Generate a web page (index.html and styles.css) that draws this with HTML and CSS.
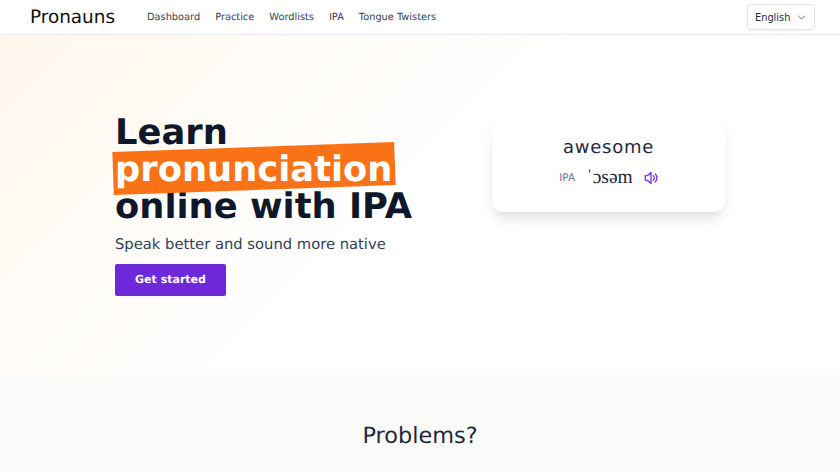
FILE: index.html
```html
<!DOCTYPE html>
<html lang="en">
<head>
  <meta charset="UTF-8">
  <title>Pronauns</title>
  <meta name="viewport" content="width=device-width, initial-scale=1">
  <link rel="stylesheet" href="styles.css">
</head>
<body>

  <header class="topbar">
    <div class="topbar-left">
      <a class="logo" href="#">Pronauns</a>
      <nav class="nav">
        <a href="#">Dashboard</a>
        <a href="#">Practice</a>
        <a href="#">Wordlists</a>
        <a href="#">IPA</a>
        <a href="#">Tongue Twisters</a>
      </nav>
    </div>
    <button class="lang" type="button">
      English
      <svg class="chevron" viewBox="0 0 20 20" fill="none" stroke="currentColor" stroke-width="1.5" stroke-linecap="round" stroke-linejoin="round"><path d="M5 7.5l5 5 5-5"/></svg>
    </button>
  </header>

  <section class="hero">
    <div class="hero-text">
      <h1>Learn <span class="mark">pronunciation</span> online with IPA</h1>
      <p class="sub">Speak better and sound more native</p>
      <a class="cta" href="#">Get started</a>
    </div>
    <div class="card">
      <div class="word">awesome</div>
      <div class="ipa-row">
        <span class="ipa-label">IPA</span>
        <span class="ipa">ˈɔsəm</span>
        <svg class="speaker" viewBox="0 0 16 16" fill="none" stroke="currentColor" stroke-width="1.6" stroke-linecap="round" stroke-linejoin="round">
          <path d="M8 1.800v12.400L4 10.700H1.500V5.300H4z"/>
          <path d="M10.600 5.400a3.600 3.600 0 0 1 0 5.200"/>
          <path d="M12.800 3.400a6.400 6.400 0 0 1 0 9.200"/>
        </svg>
      </div>
    </div>
  </section>

  <section class="problems">
    <h2>Problems?</h2>
  </section>

</body>
</html>
```

FILE: styles.css
```css
* { box-sizing: border-box; }

html, body {
  height: 100%;
  overflow: hidden;
}

body {
  margin: 0;
  font-family: "DejaVu Sans", sans-serif;
  text-rendering: geometricPrecision;
  background: #fff;
  color: #0f172a;
}

a {
  color: inherit;
  text-decoration: none;
}

.topbar {
  display: flex;
  align-items: center;
  justify-content: space-between;
  height: 35px;
  padding: 0 25px 0 30px;
  border-bottom: 1px solid #e9ebef;
}

.topbar-left {
  display: flex;
  align-items: center;
  gap: 32px;
}

.logo {
  font-size: 18.4px;
  color: #111;
}

.nav {
  display: flex;
  gap: 15px;
  font-size: 9.8px;
  color: #334155;
}

.lang {
  display: flex;
  align-items: center;
  justify-content: space-between;
  width: 68px;
  height: 26px;
  padding: 0 6px 0 7px;
  background: #fff;
  border: 1px solid #e2e4e9;
  border-radius: 4px;
  box-shadow: 0 1px 2px rgba(0, 0, 0, 0.05);
  font-family: inherit;
  font-size: 9.8px;
  color: #1f2937;
}

.chevron {
  width: 13px;
  height: 13px;
  color: #6b7280;
}

.hero {
  display: flex;
  align-items: flex-start;
  justify-content: space-between;
  height: 340px;
  padding: 79px 115px 0;
  background: linear-gradient(135deg, #fff7ed 0%, #ffffff 50%);
}

h1 {
  margin: 0;
  width: 320px;
  font-size: 35.3px;
  line-height: 37px;
  font-weight: 700;
  color: #0f172a;
}

.mark {
  position: relative;
  z-index: 0;
  display: inline-block;
  color: #fff;
  white-space: nowrap;
}

.mark::before {
  content: "";
  position: absolute;
  z-index: -1;
  left: -2px;
  right: -2px;
  top: -4px;
  bottom: -2px;
  background: #f97316;
  transform: rotate(-2deg);
}

.sub {
  margin: 10px 0 0;
  font-size: 14.75px;
  line-height: 20px;
  color: #334155;
}

.cta {
  display: inline-block;
  margin-top: 9px;
  width: 111px;
  height: 32px;
  line-height: 32px;
  text-align: center;
  font-size: 11px;
  font-weight: 700;
  color: #fff;
  background: #6d28d9;
  border-radius: 2px;
}

.card {
  width: 233px;
  height: 97px;
  margin-top: 1px;
  padding-top: 21px;
  background: #fff;
  border-radius: 10px;
  box-shadow: 0 10px 15px -3px rgba(0, 0, 0, 0.1), 0 4px 6px -2px rgba(0, 0, 0, 0.05);
  text-align: center;
}

.word {
  font-size: 18px;
  line-height: 24px;
  letter-spacing: 0.75px;
  color: #1e293b;
}

.ipa-row {
  display: flex;
  align-items: center;
  justify-content: center;
  gap: 11px;
  margin-top: 7px;
}

.ipa-label {
  font-size: 10.5px;
  color: #64748b;
}

.ipa {
  font-family: "Liberation Serif", serif;
  font-size: 19.5px;
  color: #1e293b;
}

.speaker {
  width: 14px;
  height: 14px;
  color: #7c3aed;
}

.problems {
  height: 97px;
  padding-top: 47px;
  background: #fafaf9;
  text-align: center;
}

h2 {
  margin: 0;
  font-size: 22.4px;
  line-height: 28px;
  font-weight: 400;
  color: #1e293b;
}
```
